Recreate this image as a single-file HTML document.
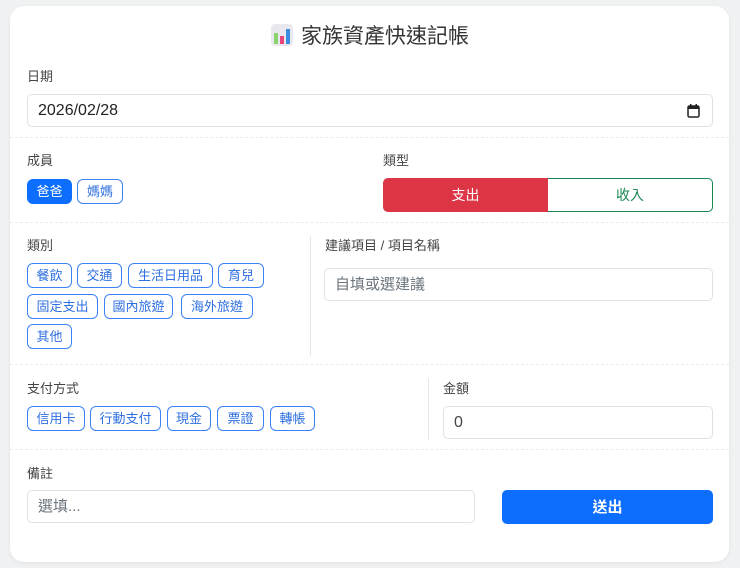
<!DOCTYPE html>
<html><head><meta charset="utf-8"><style>
*{box-sizing:border-box;margin:0;padding:0}
body{width:740px;height:568px;background:#f0f1f2;font-family:"Liberation Sans","Noto Sans CJK TC",sans-serif;position:relative;overflow:hidden;color:#333}
.card{position:absolute;left:10px;top:6px;width:719px;height:556px;background:#fff;border-radius:14px;box-shadow:0 1px 4px rgba(0,0,0,.06)}
.a{position:absolute}
.lbl{position:absolute;font-size:13px;color:#444;line-height:16px;top:0}
.inp{position:absolute;border:1px solid #dee2e6;border-radius:5px;background:#fff;font-size:15px;line-height:32px;padding-left:10px;color:#6c757d}
.chip{position:absolute;height:25px;border:1.5px solid #3b82f6;border-radius:6px;color:#2f6fe0;font-size:13px;line-height:24px;text-align:center;background:#fff}
.hr{position:absolute;left:10px;width:719px;border-top:1px dashed #ececec}
.vr{position:absolute;width:1px;background:#e6e6e6}
</style></head><body>
<div class="card"></div>
<div class="a" style="left:0;top:23px;width:740px;text-align:center;font-size:21px;line-height:28px;color:#333"><svg width="22" height="22" viewBox="0 0 22 22" style="vertical-align:-3px;margin-right:8px"><rect x="0" y="0" width="22" height="22" rx="4" fill="#e8e8ee"/><rect x="3" y="9" width="4" height="11" fill="#8bd36a"/><rect x="9" y="12" width="4" height="8" fill="#e8457a"/><rect x="15" y="5" width="4" height="15" fill="#3b8be0"/></svg>家族資產快速記帳</div>
<div class="lbl" style="left:27px;top:69px">日期</div>
<div class="inp" style="left:27px;top:94px;width:686px;height:33px;color:#222;font-size:16px">2026/02/28
<svg class="a" style="right:12px;top:9px" width="13" height="14" viewBox="0 0 13 14"><rect x="1" y="2" width="11" height="11" rx="1.5" fill="none" stroke="#222" stroke-width="1.5"/><rect x="1" y="2" width="11" height="3" fill="#222"/><rect x="3" y="0" width="1.5" height="3" fill="#222"/><rect x="8.5" y="0" width="1.5" height="3" fill="#222"/></svg></div>
<div class="hr" style="top:137px"></div>
<div class="lbl" style="left:27px;top:153px">成員</div>
<div class="chip" style="left:27px;top:179px;width:45px;background:#0d6efd;border-color:#0d6efd;color:#fff">爸爸</div>
<div class="chip" style="left:77px;top:179px;width:46px">媽媽</div>
<div class="lbl" style="left:383px;top:153px">類型</div>
<div class="a" style="left:383px;top:178px;width:165px;height:34px;background:#dc3545;border-radius:5px 0 0 5px;color:#fff;font-size:14px;line-height:35px;text-align:center">支出</div>
<div class="a" style="left:548px;top:178px;width:165px;height:34px;border:1px solid #198754;border-left:none;border-radius:0 5px 5px 0;color:#198754;font-size:14px;line-height:33px;text-align:center">收入</div>
<div class="hr" style="top:222px"></div>
<div class="lbl" style="left:27px;top:238px">類別</div>
<div class="vr" style="left:310px;top:236px;height:120px"></div>
<div class="chip" style="left:27px;top:263px;width:45px">餐飲</div>
<div class="chip" style="left:77px;top:263px;width:45px">交通</div>
<div class="chip" style="left:128px;top:263px;width:85px">生活日用品</div>
<div class="chip" style="left:218px;top:263px;width:46px">育兒</div>
<div class="chip" style="left:27px;top:294px;width:71px">固定支出</div>
<div class="chip" style="left:104px;top:294px;width:69px">國內旅遊</div>
<div class="chip" style="left:181px;top:294px;width:72px">海外旅遊</div>
<div class="chip" style="left:27px;top:324px;width:45px">其他</div>
<div class="lbl" style="left:325px;top:238px">建議項目 / 項目名稱</div>
<div class="inp" style="left:324px;top:268px;width:389px;height:33px">自填或選建議</div>
<div class="hr" style="top:364px"></div>
<div class="lbl" style="left:27px;top:381px">支付方式</div>
<div class="chip" style="left:27px;top:406px;width:58px">信用卡</div>
<div class="chip" style="left:90px;top:406px;width:71px">行動支付</div>
<div class="chip" style="left:167px;top:406px;width:44px">現金</div>
<div class="chip" style="left:217px;top:406px;width:47px">票證</div>
<div class="chip" style="left:270px;top:406px;width:45px">轉帳</div>
<div class="vr" style="left:428px;top:378px;height:62px"></div>
<div class="lbl" style="left:443px;top:381px">金額</div>
<div class="inp" style="left:443px;top:406px;width:270px;height:33px;color:#444;font-size:16px">0</div>
<div class="hr" style="top:449px"></div>
<div class="lbl" style="left:27px;top:466px">備註</div>
<div class="inp" style="left:27px;top:490px;width:448px;height:33px">選填...</div>
<div class="a" style="left:502px;top:490px;width:211px;height:34px;background:#0d6efd;border-radius:5px;color:#fff;font-size:15px;font-weight:bold;line-height:35px;text-align:center">送出</div>
</body></html>
